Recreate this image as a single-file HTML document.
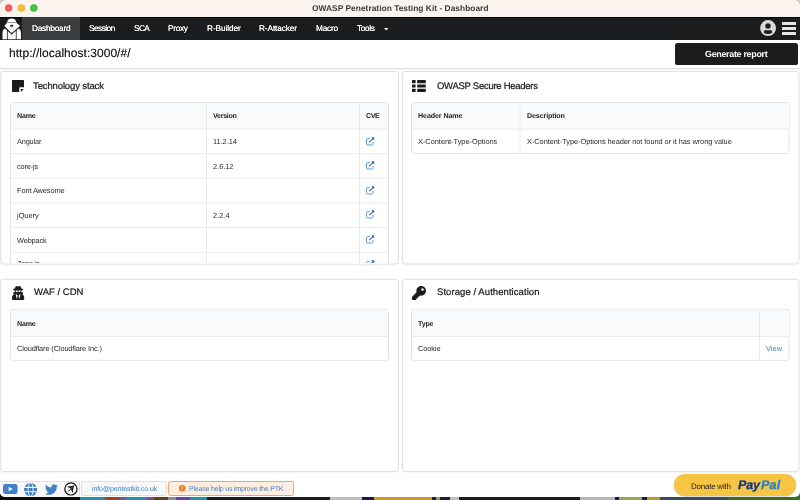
<!DOCTYPE html>
<html>
<head>
<meta charset="utf-8">
<title>OWASP Penetration Testing Kit - Dashboard</title>
<style>
*{box-sizing:border-box;margin:0;padding:0}
html,body{width:800px;height:500px;overflow:hidden}
body{position:relative;font-family:"Liberation Sans",sans-serif;color:#222;background:#1b1b1b}
.abs{position:absolute}
.t{position:absolute;white-space:nowrap;line-height:1;color:#2a2a2a;will-change:transform;text-rendering:geometricPrecision}
#desk{left:0;top:494px;width:800px;height:6px;background:linear-gradient(90deg,#0c0c0c 0px,#0c0c0c 80px,#2c8da6 80px,#2c8da6 105px,#94482a 105px,#94482a 119px,#7a52a8 119px,#7a52a8 126px,#2c8da6 126px,#2c8da6 146px,#7a4aa0 146px,#7a4aa0 154px,#6e3c24 154px,#6e3c24 168px,#8c8c8c 168px,#8c8c8c 176px,#7040a0 176px,#7040a0 190px,#2c8da6 190px,#2c8da6 207px,#1d1d1d 207px,#1d1d1d 330px,#bcc0c2 330px,#bcc0c2 362px,#1a1a45 362px,#1a1a45 374px,#c99a2a 374px,#c99a2a 432px,#1a1a45 432px,#1a1a45 436px,#8ab030 436px,#8ab030 440px,#1a1a45 440px,#1a1a45 450px,#bcc0c2 450px,#bcc0c2 459px,#1d1d1d 459px,#1d1d1d 580px,#b2b6b8 580px,#b2b6b8 615px,#1a1a45 615px,#1a1a45 619px,#a2a252 619px,#a2a252 642px,#1a1a45 642px,#1a1a45 647px,#c09a28 647px,#c09a28 660px,#3b4c5e 660px,#3b4c5e 728px,#3d6b1f 728px,#3d6b1f 800px)}
#win{left:0;top:0;width:800px;height:496.8px;filter:blur(.3px);background:#fff;border-radius:6.5px 6.5px 5px 5px;overflow:hidden}
#titlebar{left:0;top:0;width:800px;height:17px;background:#fbf3ee}
.tl{position:absolute;top:4.4px;width:7.2px;height:7.2px;border-radius:50%}
#nav{left:0;top:17px;width:800px;height:22.5px;background:linear-gradient(#060606 0,#060606 .7px,#1b1c1d .7px)}
.panel{position:absolute;border:1px solid #e0e0e1;border-radius:3px;background:#fff;box-shadow:0 0.5px 1px rgba(34,36,38,.10)}
.tbl{position:absolute;border:1px solid #e2e2e3;border-radius:2.5px;background:#fff;overflow:hidden}
.th{position:absolute;left:0;top:0;right:0;background:#f9fafb;border-bottom:1px solid #e6e6e7}
.hl{position:absolute;left:0;right:0;height:1px;background:#ececed}
.vl{position:absolute;top:0;bottom:0;width:1px;background:#ececed}
.ic{position:absolute;overflow:visible}
</style>
</head>
<body>
<div id="desk" class="abs"></div>
<div class="abs" style="left:0;top:0;width:800px;height:8px;background:#c8cacc"></div>
<div class="abs" style="left:-5px;top:6px;width:810px;height:484px;background:#fff"></div>
<div id="win" class="abs">
  <div id="titlebar" class="abs">
    <svg class="ic" style="left:0;top:0" width="44" height="17" viewBox="0 0 44 17"><circle cx="8.65" cy="8" r="3.55" fill="#f2625a" stroke="#e4493f" stroke-width=".5"/><circle cx="21.4" cy="8" r="3.55" fill="#f7be40" stroke="#e5a72b" stroke-width=".5"/><circle cx="33.8" cy="8" r="3.55" fill="#46c347" stroke="#2fae31" stroke-width=".5"/></svg>
  </div>
  <div class="t" style="left:311.70px;top:3.80px;font-size:8.4px;letter-spacing:0.023px;font-weight:bold;color:#3d3d3d;">OWASP Penetration Testing Kit - Dashboard</div>
  <svg class="ic" style="left:0;top:0" width="800" height="497" viewBox="0 0 800 497">
    <defs>
      <filter id="sh" x="-2%" y="-5%" width="104%" height="112%"><feDropShadow dx="0" dy="0.5" stdDeviation="0.45" flood-color="#222426" flood-opacity="0.07"/></filter>
      <clipPath id="c1"><rect x="1.2" y="71.9" width="396.7" height="191.6" rx="2"/></clipPath>
    </defs>
    <path d="M-1 39 H801 V66.400 Q801 68.400 799 68.400 H1 Q-1 68.400 -1 66.400 Z" fill="#fff" stroke="#dfdfe1" stroke-width="1" filter="url(#sh)"/>
    <g fill="#fff" stroke="#dfdfe1" stroke-width="1" filter="url(#sh)">
      <rect x="0.7" y="71.4" width="397.7" height="192.6" rx="2.6"/>
      <rect x="402.5" y="71.4" width="396.4" height="192.6" rx="2.6"/>
      <rect x="0.7" y="279.3" width="397.7" height="192.2" rx="2.6"/>
      <rect x="402.5" y="279.3" width="396.4" height="192.2" rx="2.6"/>
    </g>
    <g clip-path="url(#c1)">
      <rect x="10.5" y="102.5" width="378" height="200" rx="2.4" fill="#fff" stroke="#e4e4e6"/>
      <path d="M11 105.400 Q11 103 13.400 103 H385.600 Q388 103 388 105.400 V128.500 H11 Z" fill="#f9fafb"/>
      <path d="M11 129H388" stroke="#ebebed" fill="none"/>
      <path d="M11 153.650H388M11 178.300H388M11 202.950H388M11 227.600H388M11 252.250H388" stroke="#eaeaeb" fill="none"/>
      <path d="M206.500 103V300M359.500 103V300" stroke="#eaeaeb" fill="none"/>
    </g>
    <g>
      <rect x="411.500" y="102.500" width="377.700" height="51.100" rx="2.400" fill="#fff" stroke="#e4e4e6"/>
      <path d="M412 105.400 Q412 103 414.400 103 H786.300 Q788.700 103 788.700 105.400 V128.500 H412 Z" fill="#f9fafb"/>
      <path d="M412 129H788.700" stroke="#ebebed" fill="none"/>
      <path d="M520 103V153" stroke="#eaeaeb" fill="none"/>
    </g>
    <g>
      <rect x="10.500" y="309.300" width="378" height="51" rx="2.400" fill="#fff" stroke="#e4e4e6"/>
      <path d="M11 312.200 Q11 309.800 13.400 309.800 H385.600 Q388 309.800 388 312.200 V336 H11 Z" fill="#f9fafb"/>
      <path d="M11 336.500H388" stroke="#ebebed" fill="none"/>
    </g>
    <g>
      <rect x="411.500" y="309.300" width="377.700" height="51" rx="2.400" fill="#fff" stroke="#e4e4e6"/>
      <path d="M412 312.200 Q412 309.800 414.400 309.800 H786.300 Q788.700 309.800 788.700 312.200 V336 H412 Z" fill="#f9fafb"/>
      <path d="M412 336.500H788.700" stroke="#ebebed" fill="none"/>
      <path d="M759.500 309.800V359.800" stroke="#eaeaeb" fill="none"/>
    </g>
  </svg>
  <div id="nav" class="abs">
    <div class="abs" style="left:22px;top:0;width:58px;height:22.5px;background:#3b3c3d"></div>
    <svg class="ic" style="left:1.5px;top:0.5px" width="20" height="22" viewBox="0 0 20 22">
      <path d="M5.2 4.1 Q5.6 0.4 9.7 0.4 Q13.8 0.4 14.2 4.1 Z" fill="#fff"/>
      <path d="M4.6 4.2 H14.8 V5.2 H4.6 Z" fill="#bbb"/>
      <path d="M5.2 5.6 L14.2 5.6 L17.3 7.9 L9.7 14.2 L3.1 7.900 Z" fill="#fff" stroke="#fff" stroke-width="1.2" stroke-linejoin="round"/>
      <ellipse cx="9.7" cy="7.7" rx="1.7" ry="1" fill="#1b1c1d"/>
      <path d="M0.5 21.200 V15.500 Q0.5 11.400 2.900 10.400 L4.900 12.300 V21.200 Z" fill="#fff"/>
      <path d="M19 21.200 V15.500 Q19 11.400 16.600 10.400 L14.600 12.300 V21.200 Z" fill="#fff"/>
      <path d="M5.700 21.200 V13.100 L9.700 16.600 L13.800 13.100 V21.200 Z" fill="#fff"/>
      <rect x="8.500" y="16.600" width="2.600" height="0.900" fill="#aaa"/>
    </svg>
    <svg class="ic" style="left:383.5px;top:10.5px" width="4.4" height="3" viewBox="0 0 44 30"><path d="M0 0H44L22 26Z" fill="#fff"/></svg>
    <svg class="ic" style="left:759.9px;top:3.2px" width="16.2" height="16.2" viewBox="0 0 162 162">
      <circle cx="81" cy="81" r="80" fill="#d9d9d9"/>
      <circle cx="80" cy="60" r="27" fill="#1b1c1d"/>
      <path d="M38 128 Q38 100 60 100 Q80 108 100 100 Q122 100 122 128 Q100 140 80 140 Q60 140 38 128Z" fill="#1b1c1d"/>
    </svg>
    <div class="abs" style="left:781.8px;top:5px;width:14.4px;height:2.6px;background:#e6e6e6;border-radius:.6px"></div>
    <div class="abs" style="left:781.8px;top:10.2px;width:14.4px;height:2.6px;background:#e6e6e6;border-radius:.6px"></div>
    <div class="abs" style="left:781.8px;top:15.4px;width:14.4px;height:2.6px;background:#e6e6e6;border-radius:.6px"></div>
  </div>
  <div class="t" style="left:31.70px;top:24.25px;font-size:8.3px;letter-spacing:-0.262px;color:#fff;text-shadow:0 0 .4px #fff;">Dashboard</div>
  <div class="t" style="left:89.20px;top:24.25px;font-size:8.3px;letter-spacing:-0.539px;color:#fff;text-shadow:0 0 .4px #fff;">Session</div>
  <div class="t" style="left:134.40px;top:24.25px;font-size:8.3px;letter-spacing:-0.631px;color:#fff;text-shadow:0 0 .4px #fff;">SCA</div>
  <div class="t" style="left:168.20px;top:24.25px;font-size:8.3px;letter-spacing:-0.305px;color:#fff;text-shadow:0 0 .4px #fff;">Proxy</div>
  <div class="t" style="left:207.00px;top:24.25px;font-size:8.3px;letter-spacing:-0.112px;color:#fff;text-shadow:0 0 .4px #fff;">R-Builder</div>
  <div class="t" style="left:259.20px;top:24.25px;font-size:8.3px;letter-spacing:-0.132px;color:#fff;text-shadow:0 0 .4px #fff;">R-Attacker</div>
  <div class="t" style="left:316.00px;top:24.25px;font-size:8.3px;letter-spacing:-0.216px;color:#fff;text-shadow:0 0 .4px #fff;">Macro</div>
  <div class="t" style="left:357.20px;top:24.25px;font-size:8.3px;letter-spacing:-0.344px;color:#fff;text-shadow:0 0 .4px #fff;">Tools</div>

  <!-- url segment -->
  
  <div class="t" style="left:9.20px;top:47.34px;font-size:12.0px;letter-spacing:0.033px;color:#1c1c1c;text-shadow:0 0 .5px rgba(0,0,0,.55);">http://localhost:3000/#/</div>
  <div class="abs" style="left:675px;top:43px;width:122.5px;height:21.5px;background:#1b1c1d;border-radius:2.6px"></div>
  <div class="t" style="left:705.00px;top:50.45px;font-size:8.9px;letter-spacing:-0.278px;font-weight:bold;color:#fff;">Generate report</div>

  <!-- panel 1 -->
  
  <svg class="ic" style="left:12.25px;top:80px" width="12" height="12" viewBox="0 0 120 120"><path fill="#1b1c1d" d="M6 0H114Q120 0 120 6V72H80Q72 72 72 80V120H6Q0 120 0 114V6Q0 0 6 0Z"/><path fill="#1b1c1d" d="M88 90H118L88 120Z"/></svg>
  <div class="t" style="left:33.20px;top:81.71px;font-size:9.5px;letter-spacing:-0.125px;color:#1a1a1a;-webkit-text-stroke:.22px #1a1a1a;">Technology stack</div>
  <div class="t" style="left:16.80px;top:113.13px;font-size:7.1px;letter-spacing:-0.209px;font-weight:bold;color:#222;">Name</div>
  <div class="t" style="left:213.20px;top:113.13px;font-size:7.1px;letter-spacing:-0.290px;font-weight:bold;color:#222;">Version</div>
  <div class="t" style="left:366.00px;top:113.13px;font-size:7.1px;letter-spacing:-0.447px;font-weight:bold;color:#222;">CVE</div>
  <div class="t" style="left:16.70px;top:137.89px;font-size:7.4px;letter-spacing:-0.181px;;">Angular</div>
  <div class="t" style="left:213.20px;top:137.89px;font-size:7.4px;letter-spacing:-0.035px;;">11.2.14</div>
  <div class="t" style="left:16.80px;top:163.49px;font-size:7.4px;letter-spacing:-0.165px;;">core-js</div>
  <div class="t" style="left:213.20px;top:163.49px;font-size:7.4px;letter-spacing:-0.013px;;">2.6.12</div>
  <div class="t" style="left:16.80px;top:187.19px;font-size:7.4px;letter-spacing:-0.105px;;">Font Awesome</div>
  <div class="t" style="left:16.60px;top:211.79px;font-size:7.4px;letter-spacing:-0.016px;;">jQuery</div>
  <div class="t" style="left:213.20px;top:211.79px;font-size:7.4px;letter-spacing:0.012px;;">2.2.4</div>
  <div class="t" style="left:16.70px;top:237.49px;font-size:7.4px;letter-spacing:-0.148px;;">Webpack</div>
  <svg class="ic" style="left:366px;top:136.50px" width="8.4" height="8.4" viewBox="0 0 84 84"><path d="M32 15H18Q5 15 5 28V67Q5 80 18 80H57Q70 80 70 67V53" fill="none" stroke="#5f97d4" stroke-width="10" stroke-linecap="round"/><path d="M36 49L74 11" stroke="#2768bf" stroke-width="11" stroke-linecap="round"/><path d="M52 3H82V33Z" fill="#2768bf"/></svg>
  <svg class="ic" style="left:366px;top:161.15px" width="8.4" height="8.4" viewBox="0 0 84 84"><path d="M32 15H18Q5 15 5 28V67Q5 80 18 80H57Q70 80 70 67V53" fill="none" stroke="#5f97d4" stroke-width="10" stroke-linecap="round"/><path d="M36 49L74 11" stroke="#2768bf" stroke-width="11" stroke-linecap="round"/><path d="M52 3H82V33Z" fill="#2768bf"/></svg>
  <svg class="ic" style="left:366px;top:185.80px" width="8.4" height="8.4" viewBox="0 0 84 84"><path d="M32 15H18Q5 15 5 28V67Q5 80 18 80H57Q70 80 70 67V53" fill="none" stroke="#5f97d4" stroke-width="10" stroke-linecap="round"/><path d="M36 49L74 11" stroke="#2768bf" stroke-width="11" stroke-linecap="round"/><path d="M52 3H82V33Z" fill="#2768bf"/></svg>
  <svg class="ic" style="left:366px;top:210.45px" width="8.4" height="8.4" viewBox="0 0 84 84"><path d="M32 15H18Q5 15 5 28V67Q5 80 18 80H57Q70 80 70 67V53" fill="none" stroke="#5f97d4" stroke-width="10" stroke-linecap="round"/><path d="M36 49L74 11" stroke="#2768bf" stroke-width="11" stroke-linecap="round"/><path d="M52 3H82V33Z" fill="#2768bf"/></svg>
  <svg class="ic" style="left:366px;top:235.10px" width="8.4" height="8.4" viewBox="0 0 84 84"><path d="M32 15H18Q5 15 5 28V67Q5 80 18 80H57Q70 80 70 67V53" fill="none" stroke="#5f97d4" stroke-width="10" stroke-linecap="round"/><path d="M36 49L74 11" stroke="#2768bf" stroke-width="11" stroke-linecap="round"/><path d="M52 3H82V33Z" fill="#2768bf"/></svg>
  <div class="abs" style="left:0;top:0;width:800px;height:263.4px;overflow:hidden">
    <svg class="ic" style="left:366px;top:259.75px" width="8.4" height="8.4" viewBox="0 0 84 84"><path d="M32 15H18Q5 15 5 28V67Q5 80 18 80H57Q70 80 70 67V53" fill="none" stroke="#5f97d4" stroke-width="10" stroke-linecap="round"/><path d="M36 49L74 11" stroke="#2768bf" stroke-width="11" stroke-linecap="round"/><path d="M52 3H82V33Z" fill="#2768bf"/></svg>
    <div class="t" style="left:16.70px;top:260.29px;font-size:7.4px;letter-spacing:-0.258px;;">Zone.js</div>
  </div>

  <!-- panel 2 -->
  
  <svg class="ic" style="left:412.4px;top:80px" width="13.8" height="12" viewBox="0 0 138 120">
    <rect x="0" y="0" width="36" height="32" rx="5" fill="#1b1c1d"/><rect x="52" y="0" width="86" height="32" rx="5" fill="#1b1c1d"/>
    <rect x="0" y="44" width="36" height="32" rx="5" fill="#1b1c1d"/><rect x="52" y="44" width="86" height="32" rx="5" fill="#1b1c1d"/>
    <rect x="0" y="88" width="36" height="32" rx="5" fill="#1b1c1d"/><rect x="52" y="88" width="86" height="32" rx="5" fill="#1b1c1d"/>
  </svg>
  <div class="t" style="left:437.20px;top:81.71px;font-size:9.5px;letter-spacing:-0.271px;color:#1a1a1a;-webkit-text-stroke:.22px #1a1a1a;">OWASP Secure Headers</div>
  <div class="t" style="left:417.70px;top:113.13px;font-size:7.1px;letter-spacing:-0.086px;font-weight:bold;color:#222;">Header Name</div>
  <div class="t" style="left:526.80px;top:113.13px;font-size:7.1px;letter-spacing:-0.113px;font-weight:bold;color:#222;">Description</div>
  <div class="t" style="left:417.70px;top:137.89px;font-size:7.4px;letter-spacing:-0.019px;;">X-Content-Type-Options</div>
  <div class="t" style="left:526.80px;top:137.89px;font-size:7.4px;letter-spacing:-0.052px;;">X-Content-Type-Options header not found or it has wrong value</div>

  <!-- panel 3 -->
  
  <svg class="ic" style="left:12.25px;top:285.75px" width="12.25" height="14" viewBox="0 0 448 512"><path fill="#1b1c1d" d="M383.900 308.300l23.900-62.600c4-10.500-3.700-21.700-15-21.700h-58.500c11-18.900 17.800-40.600 17.800-64v-.3c39.200-7.800 64-19.100 64-31.700 0-13.300-27.300-25.100-70.100-33-9.200-32.800-27-65.800-40.600-82.800-9.500-11.900-25.900-15.600-39.500-8.800l-27.600 13.800c-9 4.500-19.600 4.500-28.600 0L182.100 3.400c-13.600-6.800-30-3.100-39.500 8.800-13.500 17-31.400 50-40.600 82.800-42.700 7.900-70 19.700-70 33 0 12.600 24.800 23.900 64 31.700v.3c0 23.400 6.800 45.100 17.800 64H56.300c-11.500 0-19.200 11.700-14.700 22.300l25.800 60.200C27.300 329.800 0 372.700 0 422.400v44.800C0 491.900 20.100 512 44.800 512h358.400c24.700 0 44.800-20.100 44.800-44.800v-44.800c0-48.400-25.800-90.400-64.100-114.100zM176 480l-41.600-192 49.600 32 24 40-32 120zm96 0l-32-120 24-40 49.600-32L272 480zm41.700-298.500c-3.900 11.900-7 24.600-16.500 33.400-10.100 9.300-48 22.400-64-25-2.800-8.400-15.400-8.400-18.300 0-17 50.200-56 32.400-64 25-9.500-8.800-12.700-21.500-16.500-33.400-.8-2.500-6.300-5.700-6.300-5.800v-10.800c28.300 3.600 61 5.800 96 5.800s67.700-2.100 96-5.800v10.800c-.1.100-5.600 3.200-6.400 5.800z"/></svg>
  <div class="t" style="left:33.70px;top:288.26px;font-size:9.5px;letter-spacing:0.029px;color:#1a1a1a;-webkit-text-stroke:.22px #1a1a1a;">WAF / CDN</div>
  <div class="t" style="left:16.80px;top:320.73px;font-size:7.1px;letter-spacing:-0.176px;font-weight:bold;color:#222;">Name</div>
  <div class="t" style="left:16.80px;top:345.09px;font-size:7.4px;letter-spacing:-0.127px;;">Cloudflare (Cloudflare Inc.)</div>

  <!-- panel 4 -->
  
  <svg class="ic" style="left:412.3px;top:285.75px" width="14" height="14" viewBox="0 0 512 512"><path fill="#1b1c1d" d="M512 176.001C512 273.203 433.202 352 336 352c-11.220 0-22.190-1.062-32.827-3.069l-24.012 27.014A23.999 23.999 0 0 1 261.223 384H224v40c0 13.255-10.745 24-24 24h-40v40c0 13.255-10.745 24-24 24H24c-13.255 0-24-10.745-24-24v-78.059c0-6.365 2.529-12.470 7.029-16.971l161.802-161.802C163.108 213.814 160 195.271 160 176 160 78.798 238.797.001 335.999 0 433.488-.001 512 78.511 512 176.001zM336 128c0 26.510 21.490 48 48 48s48-21.490 48-48-21.490-48-48-48-48 21.490-48 48z"/></svg>
  <div class="t" style="left:437.20px;top:288.26px;font-size:9.5px;letter-spacing:0.070px;color:#1a1a1a;-webkit-text-stroke:.22px #1a1a1a;">Storage / Authentication</div>
  <div class="t" style="left:417.70px;top:320.73px;font-size:7.1px;letter-spacing:-0.177px;font-weight:bold;color:#222;">Type</div>
  <div class="t" style="left:417.70px;top:345.09px;font-size:7.4px;letter-spacing:-0.103px;;">Cookie</div>
  <div class="t" style="left:766.20px;top:345.09px;font-size:7.4px;letter-spacing:0.036px;color:#4183c4;">View</div>

  <!-- footer -->
  <div class="abs" style="left:-2px;top:481px;width:81.500px;height:18px;background:#f8f8f9;border:1px solid #e2e2e3;border-radius:2.500px"></div>
  <div class="abs" style="left:81.3px;top:481.2px;width:85.6px;height:15.2px;background:#f8f8f9;border:1px solid #dfdfe0;border-radius:2.5px"></div>
  <svg class="ic" style="left:3.2px;top:484px" width="14.6" height="9.9" viewBox="0 0 146 99"><rect x="0" y="0" width="146" height="99" rx="24" fill="#3f82c8"/><path d="M57 27L99 49.500L57 72Z" fill="#f8f8f9"/></svg>
  <svg class="ic" style="left:24px;top:482.5px" width="13.2" height="13.2" viewBox="0 0 132 132"><circle cx="66" cy="66" r="65" fill="#3a7dc6"/><g fill="none" stroke="#f8f8f9"><ellipse cx="66" cy="66" rx="25" ry="66" stroke-width="9"/><path d="M0 44H132M0 88H132" stroke-width="11"/></g></svg>
  <svg class="ic" style="left:44.5px;top:483.6px" width="13" height="11.2" viewBox="0 48 512 416"><path fill="#3f82c8" d="M459.370 151.716c.325 4.548.325 9.097.325 13.645 0 138.720-105.583 298.558-298.558 298.558-59.452 0-114.680-17.219-161.137-47.106 8.447.974 16.568 1.299 25.340 1.299 49.055 0 94.213-16.568 130.274-44.832-46.132-.975-84.792-31.188-98.112-72.772 6.498.974 12.995 1.624 19.818 1.624 9.421 0 18.843-1.300 27.614-3.573-48.081-9.747-84.143-51.980-84.143-102.985v-1.299c13.969 7.797 30.214 12.670 47.431 13.319-28.264-18.843-46.781-51.005-46.781-87.391 0-19.492 5.197-37.360 14.294-52.954 51.655 63.675 129.300 105.258 216.365 109.807-1.624-7.797-2.599-15.918-2.599-24.040 0-57.828 46.782-104.934 104.934-104.934 30.213 0 57.502 12.670 76.670 33.137 23.715-4.548 46.456-13.320 66.599-25.340-7.798 24.366-24.366 44.833-46.132 57.827 21.117-2.273 41.584-8.122 60.426-16.243-14.292 20.791-32.161 39.308-52.628 54.253z"/></svg>
  <svg class="ic" style="left:63.6px;top:482.4px" width="13.8" height="13.8" viewBox="0 0 138 138"><circle cx="69" cy="69" r="61" fill="#fff" stroke="#111" stroke-width="12"/><path d="M100 36L28 48L66 62L86 112Z" fill="#111"/><path d="M100 36L42 96" stroke="#111" stroke-width="10"/><path d="M68 64L86 50" stroke="#fff" stroke-width="5"/></svg>
  
  <div class="t" style="left:91.80px;top:486.13px;font-size:7.1px;letter-spacing:-0.132px;color:#4183c4;">info@pentestkit.co.uk</div>
  <div class="abs" style="left:168.2px;top:481px;width:125.7px;height:15.4px;background:#ffeee0;border:1px solid #f3a26e;border-radius:2.5px"></div>
  <svg class="ic" style="left:179.2px;top:485.3px" width="6.4" height="6.4" viewBox="0 0 64 64"><circle cx="32" cy="32" r="32" fill="#f2711c"/><rect x="27" y="12" width="10" height="26" rx="3" fill="#ffedde"/><circle cx="32" cy="48" r="6" fill="#ffedde"/></svg>
  <div class="t" style="left:189.10px;top:486.13px;font-size:7.1px;letter-spacing:-0.236px;color:#4183c4;">Please help us improve the PTK</div>
  <div class="abs" style="left:673.6px;top:473.8px;width:122.9px;height:22.4px;background:#f7c544;border-radius:11.2px;box-shadow:0 0.5px 1.5px rgba(0,0,0,.25)"></div>
  <div class="t" style="left:691.20px;top:482.89px;font-size:8.0px;letter-spacing:-0.235px;color:#222;">Donate with</div>
  <div class="t" style="left:738.10px;top:479.09px;font-size:12.5px;letter-spacing:-0.175px;font-weight:bold;font-style:italic;color:#12378a;-webkit-text-stroke:.3px #12378a;">Pay</div>
  <div class="t" style="left:760.50px;top:479.09px;font-size:12.5px;letter-spacing:0.267px;font-weight:bold;font-style:italic;color:#1b84d4;-webkit-text-stroke:.3px #1b84d4;">Pal</div>
</div>
</body>
</html>
